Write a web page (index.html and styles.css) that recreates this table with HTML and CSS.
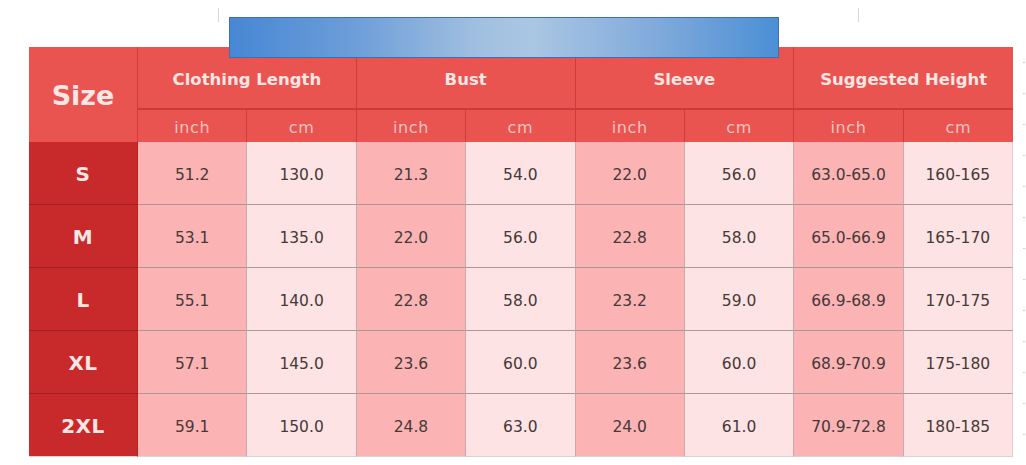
FILE: index.html
```html
<!DOCTYPE html>
<html>
<head>
<meta charset="utf-8">
<link rel="stylesheet" href="styles.css">
</head>
<body>
<div class="page">
  <span class="tick tick-left"></span>
  <span class="tick tick-right"></span>
  <div class="banner"></div>
  <div class="dots">
    <i></i><i></i><i></i><i></i><i></i><i></i><i></i><i></i><i></i><i></i><i></i><i></i><i></i>
  </div>
  <div class="chart">
    <div class="h size-head">Size</div>
    <div class="h group">Clothing Length</div>
    <div class="h group">Bust</div>
    <div class="h group">Sleeve</div>
    <div class="h group last">Suggested Height</div>
    <div class="h unit">inch</div><div class="h unit">cm</div>
    <div class="h unit">inch</div><div class="h unit">cm</div>
    <div class="h unit">inch</div><div class="h unit">cm</div>
    <div class="h unit">inch</div><div class="h unit last">cm</div>

    <div class="sz">S</div>
    <div class="c in">51.2</div><div class="c cm">130.0</div>
    <div class="c in">21.3</div><div class="c cm">54.0</div>
    <div class="c in">22.0</div><div class="c cm">56.0</div>
    <div class="c in">63.0-65.0</div><div class="c cm last">160-165</div>

    <div class="sz">M</div>
    <div class="c in">53.1</div><div class="c cm">135.0</div>
    <div class="c in">22.0</div><div class="c cm">56.0</div>
    <div class="c in">22.8</div><div class="c cm">58.0</div>
    <div class="c in">65.0-66.9</div><div class="c cm last">165-170</div>

    <div class="sz">L</div>
    <div class="c in">55.1</div><div class="c cm">140.0</div>
    <div class="c in">22.8</div><div class="c cm">58.0</div>
    <div class="c in">23.2</div><div class="c cm">59.0</div>
    <div class="c in">66.9-68.9</div><div class="c cm last">170-175</div>

    <div class="sz">XL</div>
    <div class="c in">57.1</div><div class="c cm">145.0</div>
    <div class="c in">23.6</div><div class="c cm">60.0</div>
    <div class="c in">23.6</div><div class="c cm">60.0</div>
    <div class="c in">68.9-70.9</div><div class="c cm last">175-180</div>

    <div class="sz bottom">2XL</div>
    <div class="c in bottom">59.1</div><div class="c cm bottom">150.0</div>
    <div class="c in bottom">24.8</div><div class="c cm bottom">63.0</div>
    <div class="c in bottom">24.0</div><div class="c cm bottom">61.0</div>
    <div class="c in bottom">70.9-72.8</div><div class="c cm last bottom">180-185</div>
  </div>
</div>
</body>
</html>
```

FILE: styles.css
```css
* { box-sizing: border-box; }
html, body { margin: 0; padding: 0; background: #ffffff; }
body { font-family: "DejaVu Sans", "Open Sans", sans-serif; }

.page {
  position: relative;
  width: 1026px;
  height: 465px;
  padding: 47px 0 0 29px;
}

.chart {
  display: grid;
  width: 984px;
  grid-template-columns: 109px repeat(8, 1fr);
  grid-template-rows: 63px 32px repeat(5, 63px);
}

.h {
  background: #ea5450;
  color: #fde6e4;
  display: flex;
  align-items: center;
  justify-content: center;
  border-right: 1px solid #cf3d3b;
}
.h.last { border-right: none; }

.size-head {
  grid-row: 1 / span 2;
  font-size: 27px;
  font-weight: 700;
  padding-top: 2px;
}
.group {
  grid-column: span 2;
  font-size: 16.5px;
  font-weight: 700;
  border-bottom: 2px solid #cc3a39;
  padding-top: 4px;
}
.unit {
  font-size: 16px;
  font-weight: 400;
  letter-spacing: 0.6px;
  color: #f6c2c0;
  padding-top: 3px;
}

.sz {
  background: #c8292a;
  color: #fbe6e6;
  font-size: 20px;
  font-weight: 700;
  letter-spacing: 0.5px;
  display: flex;
  align-items: center;
  justify-content: center;
  padding-top: 1px;
  border-bottom: 1px solid #9e2222;
  border-right: 1px solid #b52426;
}

.c {
  display: flex;
  align-items: center;
  justify-content: center;
  font-size: 15.5px;
  color: #45393a;
  padding-top: 3px;
  border-bottom: 1px solid #a99898;
  border-right: 1px solid #c9a9a9;
}
.c.in { background: #fbb3b3; }
.c.cm { background: #fde3e3; }
.c.last { border-right: 1px solid #e6cccc; }
.c.bottom, .sz.bottom { border-bottom: 1px solid #ddd0d0; }

.banner {
  position: absolute;
  left: 229px;
  top: 17px;
  width: 550px;
  height: 41px;
  border: 1px solid #3f6fae;
  background: linear-gradient(90deg, #4787d4 0%, #6b9dd8 22%, #a0bfe0 45%, #aac6e3 55%, #80aadb 78%, #4b8fd4 100%);
}

.tick {
  position: absolute;
  top: 8px;
  width: 1px;
  height: 14px;
  background: #d8d8d8;
}
.tick-left { left: 218px; }
.tick-right { left: 858px; }

.dots {
  position: absolute;
  left: 1023px;
  top: 62px;
  display: flex;
  flex-direction: column;
  gap: 30px;
}
.dots i {
  display: block;
  width: 2px;
  height: 1px;
  background: #cccccc;
}
```
